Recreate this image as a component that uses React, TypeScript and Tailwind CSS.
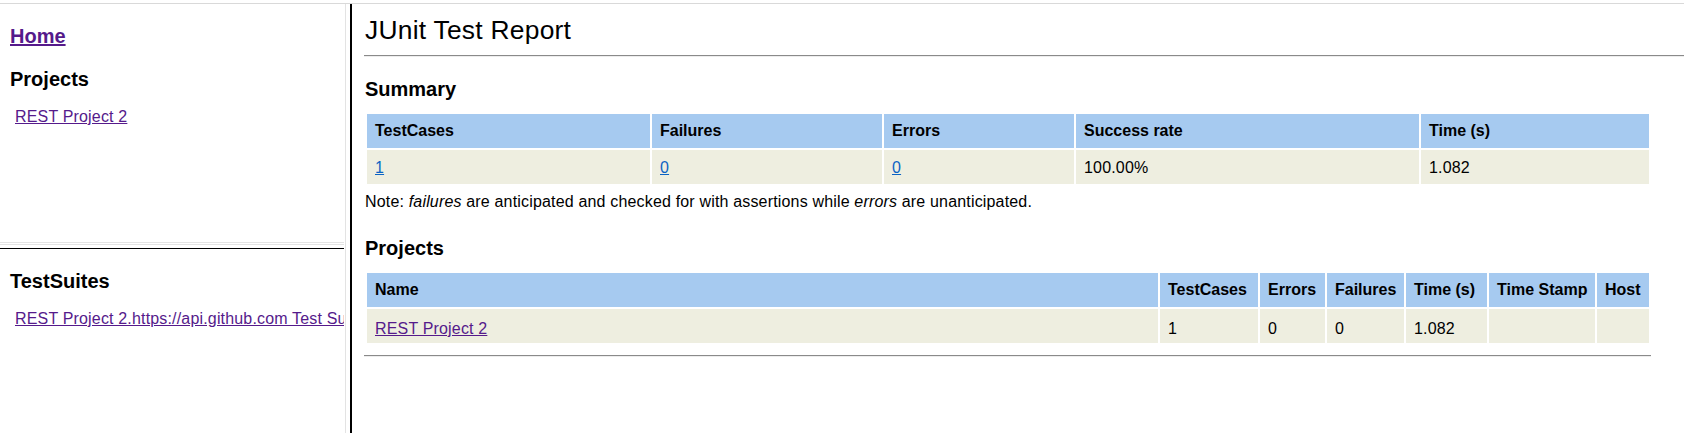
export default function App() {
  return (
    <div className="w-[1684px] h-[433px] overflow-hidden bg-white text-black font-['Liberation_Sans',Arial,sans-serif] text-[16px] leading-[18px] tracking-[0.17px]">
      <div className="h-[3px]" />
      <div className="h-px bg-[#d9d9d9]" />
      <div className="flex h-[429px]">
        {/* left frames */}
        <div className="w-[344px] flex flex-col overflow-hidden">
          <div className="h-[238px] pl-[10px]">
            <h2 className="mt-[21px] text-[20px] leading-[23px] font-bold tracking-normal">
              <a href="#" className="text-[#551a8b] underline">Home</a>
            </h2>
            <h2 className="mt-[20px] text-[20px] leading-[23px] font-bold tracking-normal">Projects</h2>
            <div className="mt-[17px] pl-[5px]">
              <a href="#" className="text-[#551a8b] underline">REST Project 2</a>
            </div>
          </div>
          <div className="h-px bg-[#e3e3e3]" />
          <div className="h-px" />
          <div className="h-px bg-[#e3e3e3]" />
          <div className="h-[3px]" />
          <div className="h-px bg-black" />
          <div className="pl-[10px]">
            <h2 className="mt-[21px] text-[20px] leading-[23px] font-bold tracking-normal">TestSuites</h2>
            <div className="mt-[17px] pl-[5px] whitespace-nowrap">
              <a href="#" className="text-[#551a8b] underline">
                REST Project 2.https://api.github.com Test Suite
              </a>
            </div>
          </div>
        </div>
        <div className="w-px" />
        <div className="w-px bg-[#e3e3e3]" />
        <div className="w-[4px]" />
        <div className="w-[2px] bg-black" />

        {/* main frame */}
        <div className="flex-1 pl-[13px]">
          <h1 className="mt-[11px] text-[26.4px] leading-[30px] font-normal tracking-[0.25px]">JUnit Test Report</h1>
          <div className="-ml-px mt-[10px] h-px bg-[#8a8a8a]" />
          <div className="-ml-px h-px bg-[#ededed]" />

          <h2 className="mt-[21px] text-[20px] leading-[23px] font-bold tracking-normal">Summary</h2>
          <table className="mt-[11px] w-[1286px] table-fixed border-separate border-spacing-[2px] text-left">
            <thead>
              <tr className="bg-[#a6caf0]">
                <th className="w-[283px] px-[8px] py-[8px] font-bold tracking-normal">TestCases</th>
                <th className="w-[230px] px-[8px] py-[8px] font-bold tracking-normal">Failures</th>
                <th className="w-[190px] px-[8px] py-[8px] font-bold tracking-normal">Errors</th>
                <th className="w-[343px] px-[8px] py-[8px] font-bold tracking-normal">Success rate</th>
                <th className="w-[228px] px-[8px] py-[8px] font-bold tracking-normal">Time (s)</th>
              </tr>
            </thead>
            <tbody>
              <tr className="bg-[#eeeee0]">
                <td className="px-[8px] pt-[9px] pb-[7px]">
                  <a href="#" className="text-[#0b63c4] underline">1</a>
                </td>
                <td className="px-[8px] pt-[9px] pb-[7px]">
                  <a href="#" className="text-[#0b63c4] underline">0</a>
                </td>
                <td className="px-[8px] pt-[9px] pb-[7px]">
                  <a href="#" className="text-[#0b63c4] underline">0</a>
                </td>
                <td className="px-[8px] pt-[9px] pb-[7px]">100.00%</td>
                <td className="px-[8px] pt-[9px] pb-[7px]">1.082</td>
              </tr>
            </tbody>
          </table>
          <div className="mt-[7px]">
            Note: <i>failures</i> are anticipated and checked for with assertions while <i>errors</i> are unanticipated.
          </div>

          <h2 className="mt-[26px] text-[20px] leading-[23px] font-bold tracking-normal">Projects</h2>
          <table className="mt-[11px] w-[1286px] table-fixed border-separate border-spacing-[2px] text-left">
            <thead>
              <tr className="bg-[#a6caf0]">
                <th className="w-[791px] px-[8px] py-[8px] font-bold tracking-normal">Name</th>
                <th className="w-[98px] whitespace-nowrap px-[8px] py-[8px] font-bold tracking-normal">TestCases</th>
                <th className="w-[65px] whitespace-nowrap px-[8px] py-[8px] font-bold tracking-normal">Errors</th>
                <th className="w-[77px] whitespace-nowrap px-[8px] py-[8px] font-bold tracking-normal">Failures</th>
                <th className="w-[81px] whitespace-nowrap px-[8px] py-[8px] font-bold tracking-normal">Time (s)</th>
                <th className="w-[106px] whitespace-nowrap px-[8px] py-[8px] font-bold tracking-normal">Time Stamp</th>
                <th className="w-[52px] whitespace-nowrap px-[8px] py-[8px] font-bold tracking-normal">Host</th>
              </tr>
            </thead>
            <tbody>
              <tr className="bg-[#eeeee0]">
                <td className="px-[8px] pt-[11px] pb-[5px]">
                  <a href="#" className="text-[#551a8b] underline">REST Project 2</a>
                </td>
                <td className="px-[8px] pt-[11px] pb-[5px]">1</td>
                <td className="px-[8px] pt-[11px] pb-[5px]">0</td>
                <td className="px-[8px] pt-[11px] pb-[5px]">0</td>
                <td className="px-[8px] pt-[11px] pb-[5px]">1.082</td>
                <td className="px-[8px] pt-[11px] pb-[5px]"></td>
                <td className="px-[8px] pt-[11px] pb-[5px]"></td>
              </tr>
            </tbody>
          </table>
          <div className="-ml-px mt-[10px] w-[1287px] h-px bg-[#8a8a8a]" />
          <div className="-ml-px w-[1287px] h-px bg-[#ededed]" />
        </div>
      </div>
    </div>
  );
}
